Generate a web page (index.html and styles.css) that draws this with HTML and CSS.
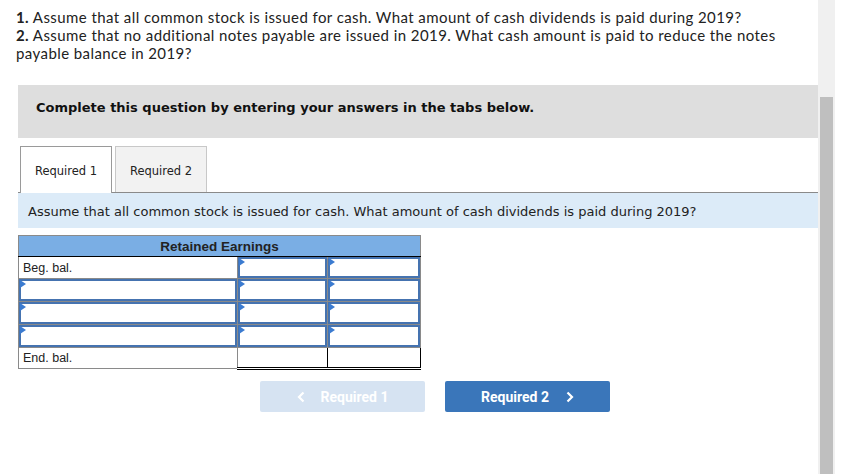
FILE: index.html
```html
<!DOCTYPE html>
<html>
<head>
<meta charset="utf-8">
<link rel="stylesheet" href="styles.css">
</head>
<body>
<div class="page">
  <main class="main">
    <div class="question">
      <p><b>1.</b> Assume that all common stock is issued for cash. What amount of cash dividends is paid during 2019?</p>
      <p><b>2.</b> Assume that no additional notes payable are issued in 2019. What cash amount is paid to reduce the notes payable balance in 2019?</p>
    </div>
    <div class="block">
      <div class="banner">Complete this question by entering your answers in the tabs below.</div>
      <div class="tabs">
        <div class="tab active">Required 1</div>
        <div class="tab">Required 2</div>
      </div>
      <div class="info">Assume that all common stock is issued for cash. What amount of cash dividends is paid during 2019?</div>
      <table class="ledger">
        <colgroup><col class="c1"><col class="c2"><col class="c3"></colgroup>
        <tr class="head"><th colspan="3">Retained Earnings</th></tr>
        <tr class="r-beg">
          <td class="label">Beg. bal.</td>
          <td class="inp"><div class="box"></div></td>
          <td class="inp"><div class="box"></div></td>
        </tr>
        <tr class="r-in">
          <td class="inp"><div class="box"></div></td>
          <td class="inp"><div class="box"></div></td>
          <td class="inp"><div class="box"></div></td>
        </tr>
        <tr class="r-in">
          <td class="inp"><div class="box"></div></td>
          <td class="inp"><div class="box"></div></td>
          <td class="inp"><div class="box"></div></td>
        </tr>
        <tr class="r-in">
          <td class="inp"><div class="box"></div></td>
          <td class="inp"><div class="box"></div></td>
          <td class="inp"><div class="box"></div></td>
        </tr>
        <tr class="r-end">
          <td class="label">End. bal.</td>
          <td class="total"></td>
          <td class="total"></td>
        </tr>
      </table>
      <div class="nav">
        <button class="btn prev"><svg class="chev left" width="8" height="12" viewBox="0 0 8 12"><path d="M6.5 1.5 L2 6 L6.5 10.5" fill="none" stroke="#fff" stroke-width="2.2"/></svg>Required 1</button>
        <button class="btn next">Required 2<svg class="chev right" width="8" height="12" viewBox="0 0 8 12"><path d="M1.5 1.5 L6 6 L1.5 10.5" fill="none" stroke="#fff" stroke-width="2.2"/></svg></button>
      </div>
    </div>
  </main>
  <div class="scrollbar"><div class="thumb"></div></div>
</div>
</body>
</html>
```
FILE: styles.css
```css
html, body {
  margin: 0;
  padding: 0;
  background: #ffffff;
  height: 474px;
  overflow: hidden;
}
.page {
  display: flex;
  height: 474px;
}
.main {
  width: 818px;
  flex: none;
}
.scrollbar {
  width: 17px;
  background: #f0f0f0;
  flex: none;
  padding-top: 97px;
  padding-left: 2px;
  box-sizing: border-box;
}
.thumb {
  width: 13px;
  height: 377px;
  background: #bfbfbf;
}
.question {
  padding: 8px 30px 0 16px;
  font-family: Lato, "Liberation Sans", sans-serif;
  font-size: 15px;
  letter-spacing: 0.42px;
  line-height: 18px;
  color: #222;
}
.question p { margin: 0; }
.question b { font-weight: 700; }
.block {
  margin: 23px 0 0 18px;
}
.banner {
  height: 53px;
  box-sizing: border-box;
  background: #dedede;
  padding: 15px 0 0 18px;
  line-height: 16px;
  font-family: "DejaVu Sans", Verdana, sans-serif;
  font-weight: bold;
  font-size: 13px;
  color: #111;
}
.tabs {
  display: flex;
  gap: 3px;
  margin-top: 8px;
  padding-left: 2px;
  border-bottom: 1px solid #8a8a8a;
}
.tab {
  width: 92px;
  height: 46px;
  box-sizing: border-box;
  border: 1px solid #c8c8c8;
  border-bottom: none;
  background: #f2f2f2;
  display: flex;
  align-items: center;
  justify-content: center;
  padding-top: 2px;
  font-family: "DejaVu Sans", Verdana, sans-serif;
  font-size: 11.5px;
  color: #222;
}
.tab.active {
  background: #fff;
  border-color: #9a9a9a;
  height: 47px;
  margin-bottom: -1px;
}
.info {
  height: 35px;
  background: #dcebf8;
  display: flex;
  align-items: center;
  padding: 1px 0 0 10px;
  box-sizing: border-box;
  font-family: "DejaVu Sans", Verdana, sans-serif;
  font-size: 13px;
  color: #222;
}
.ledger {
  margin-top: 7px;
  width: 402px;
  border-collapse: collapse;
  border: 1px solid #8a8a8a;
  font-family: "Liberation Sans", Arial, sans-serif;
  table-layout: fixed;
}
.c1 { width: 219px; }
.c2 { width: 90px; }
.c3 { width: 93px; }
.ledger tr { height: 22px; }
.ledger tr.head { height: 21px; }
.ledger tr.r-beg { height: 22px; }
.ledger tr.r-in { height: 23px; }
.ledger tr.r-end { height: 21px; }
.ledger th {
  background: #7aaee4;
  font-size: 13.5px;
  font-weight: bold;
  color: #222;
  padding: 0;
  border-bottom: 1px solid #000;
}
.ledger td {
  padding: 0;
  border: 1px solid #8a8a8a;
  font-size: 12.5px;
  color: #222;
}
.ledger tr.r-beg td { border-top: 1px solid #000; }
.ledger td.label {
  padding-left: 4px;
  border-left: none;
}
.box {
  position: relative;
  height: 22px;
  box-sizing: border-box;
  border: 2px solid #4573b0;
  background: #fff;
}
.r-beg .box { height: 21px; }
.box::before {
  content: "";
  position: absolute;
  left: -1px;
  top: -1px;
  border-left: 6px solid #3b7bd0;
  border-top: 4px solid transparent;
  border-bottom: 4px solid transparent;
}
.ledger td.total {
  border-left: 1px solid #000;
  border-right: 1px solid #000;
  border-top: 1px solid #000;
  border-bottom: 3px double #000;
}
.nav {
  display: flex;
  gap: 20px;
  margin: 11px 0 0 242px;
}
.btn {
  width: 165px;
  height: 31px;
  border: none;
  border-radius: 2px;
  color: #fff;
  font-family: Roboto, "Liberation Sans", Arial, sans-serif;
  font-weight: bold;
  font-size: 14px;
  display: flex;
  align-items: center;
  justify-content: center;
  padding: 0;
}
.btn.prev { background: #d6e3f2; }
.btn.next { background: #3a76ba; }
.chev.left { margin-right: 16px; }
.chev.right { margin-left: 17px; }
```
